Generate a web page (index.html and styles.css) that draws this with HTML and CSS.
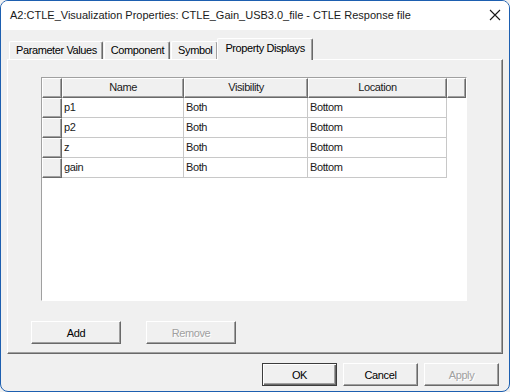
FILE: index.html
```html
<!DOCTYPE html>
<html lang="en">
<head>
    <meta charset="UTF-8">
    <title>CTLE_Visualization Properties</title>
    <link rel="stylesheet" href="styles.css">
</head>
<body>
    <div class="window">
        <div class="titlebar">
            <span class="title">A2:CTLE_Visualization Properties: CTLE_Gain_USB3.0_file - CTLE Response file</span>
            <span class="close">
                <svg width="12" height="12" viewBox="0 0 12 12"><path d="M1 1 L11 11 M11 1 L1 11" stroke="#1a1a1a" stroke-width="1.1" fill="none"/></svg>
            </span>
        </div>

        <div class="client">
            <div class="tabs">
                <div class="tab">Parameter Values</div>
                <div class="tab">Component</div>
                <div class="tab">Symbol</div>
                <div class="tab active">Property Displays</div>
            </div>

            <div class="tab-page">
                <div class="grid">
                    <div class="hcell corner"></div>
                    <div class="hcell">Name</div>
                    <div class="hcell">Visibility</div>
                    <div class="hcell">Location</div>
                    <div class="hcell"></div>

                    <div class="rowhead"></div>
                    <div class="cell">p1</div>
                    <div class="cell">Both</div>
                    <div class="cell">Bottom</div>
                    <div class="blank"></div>

                    <div class="rowhead"></div>
                    <div class="cell">p2</div>
                    <div class="cell">Both</div>
                    <div class="cell">Bottom</div>
                    <div class="blank"></div>

                    <div class="rowhead"></div>
                    <div class="cell">z</div>
                    <div class="cell">Both</div>
                    <div class="cell">Bottom</div>
                    <div class="blank"></div>

                    <div class="rowhead"></div>
                    <div class="cell">gain</div>
                    <div class="cell">Both</div>
                    <div class="cell">Bottom</div>
                    <div class="blank"></div>
                </div>

                <div class="page-actions">
                    <button class="btn wide">Add</button>
                    <button class="btn wide" disabled>Remove</button>
                </div>
            </div>

            <div class="dialog-actions">
                <button class="btn default">OK</button>
                <button class="btn">Cancel</button>
                <button class="btn" disabled>Apply</button>
            </div>
        </div>
    </div>
</body>
</html>
```

FILE: styles.css
```css
* {
    margin: 0;
    padding: 0;
    box-sizing: border-box;
}

body {
    font-family: "Liberation Sans", Arial, sans-serif;
    font-size: 11px;
    letter-spacing: -0.4px;
    color: #000;
    background: #f0f0f0;
}

.window {
    width: 510px;
    height: 392px;
    border: 1px solid #1d5fb0;
    border-radius: 8px;
    background: #f0f0f0;
    overflow: hidden;
    display: flex;
    flex-direction: column;
}

.titlebar {
    height: 29px;
    background: #fff;
    display: flex;
    align-items: center;
    justify-content: space-between;
    padding: 0 8px 1px 9px;
}

.title {
    font-size: 11px;
    letter-spacing: 0;
    color: #1a1a1a;
}

.close {
    display: flex;
}

.client {
    flex: 1;
    display: flex;
    flex-direction: column;
    padding: 8px 6px 0 6px;
}

/* tabs */
.tabs {
    display: flex;
    align-items: flex-end;
    height: 21px;
    padding-left: 2px;
    position: relative;
    z-index: 1;
}

.tab {
    height: 18px;
    padding: 0 5px 0 6px;
    line-height: 17px;
    border-top: 1px solid #fff;
    border-left: 1px solid #fff;
    border-right: 1px solid #696969;
    box-shadow: inset -1px 0 #a0a0a0;
    border-radius: 2px 2px 0 0;
    margin-right: 1px;
    white-space: nowrap;
}

.tab.active {
    height: 22px;
    margin: 0 0 -1px -2px;
    padding: 0 7px 0 7px;
    line-height: 19px;
    background: #f0f0f0;
}

.tab-page {
    height: 295px;
    border: 1px solid;
    border-color: #fff #696969 #696969 #fff;
    box-shadow: inset -1px -1px #a0a0a0;
    padding: 17px 0 0 33px;
    display: flex;
    flex-direction: column;
}

/* property grid */
.grid {
    width: 426px;
    height: 224px;
    background: #fff;
    border: 1px solid;
    border-color: #a0a0a0 #fff #fff #a0a0a0;
    display: grid;
    grid-template-columns: 20px 122px 124px 139px 19px;
    grid-auto-rows: 20px;
    align-content: start;
}

.hcell,
.rowhead {
    background: #f0f0f0;
    border: 1px solid;
    border-color: #fff #696969 #696969 #fff;
    box-shadow: inset -1px -1px #a0a0a0;
    text-align: center;
    line-height: 17px;
    color: #1a1a1a;
}

.cell {
    border-right: 1px solid #c8c8c8;
    border-bottom: 1px solid #c8c8c8;
    padding-left: 2px;
    line-height: 19px;
    color: #1a1a1a;
}

.page-actions {
    display: flex;
    gap: 25px;
    margin: 20px 0 0 -10px;
}

/* buttons */
.btn {
    width: 75px;
    height: 23px;
    font-family: inherit;
    font-size: 11px;
    font-weight: normal;
    letter-spacing: -0.4px;
    color: #000;
    background: #f0f0f0;
    border: 1px solid;
    border-color: #fff #696969 #696969 #fff;
    box-shadow: inset -1px -1px #a0a0a0;
}

.btn.wide {
    width: 90px;
}

.btn:disabled {
    color: #a0a0a0;
    text-shadow: 1px 1px #fff;
}

.btn.default {
    border-color: #3c3c3c;
    box-shadow: inset 1px 1px #fff, inset -1px -1px #696969, inset -2px -2px #a0a0a0;
}

.dialog-actions {
    display: flex;
    justify-content: flex-end;
    gap: 6px;
    padding: 9px 4px 0 0;
}
```
